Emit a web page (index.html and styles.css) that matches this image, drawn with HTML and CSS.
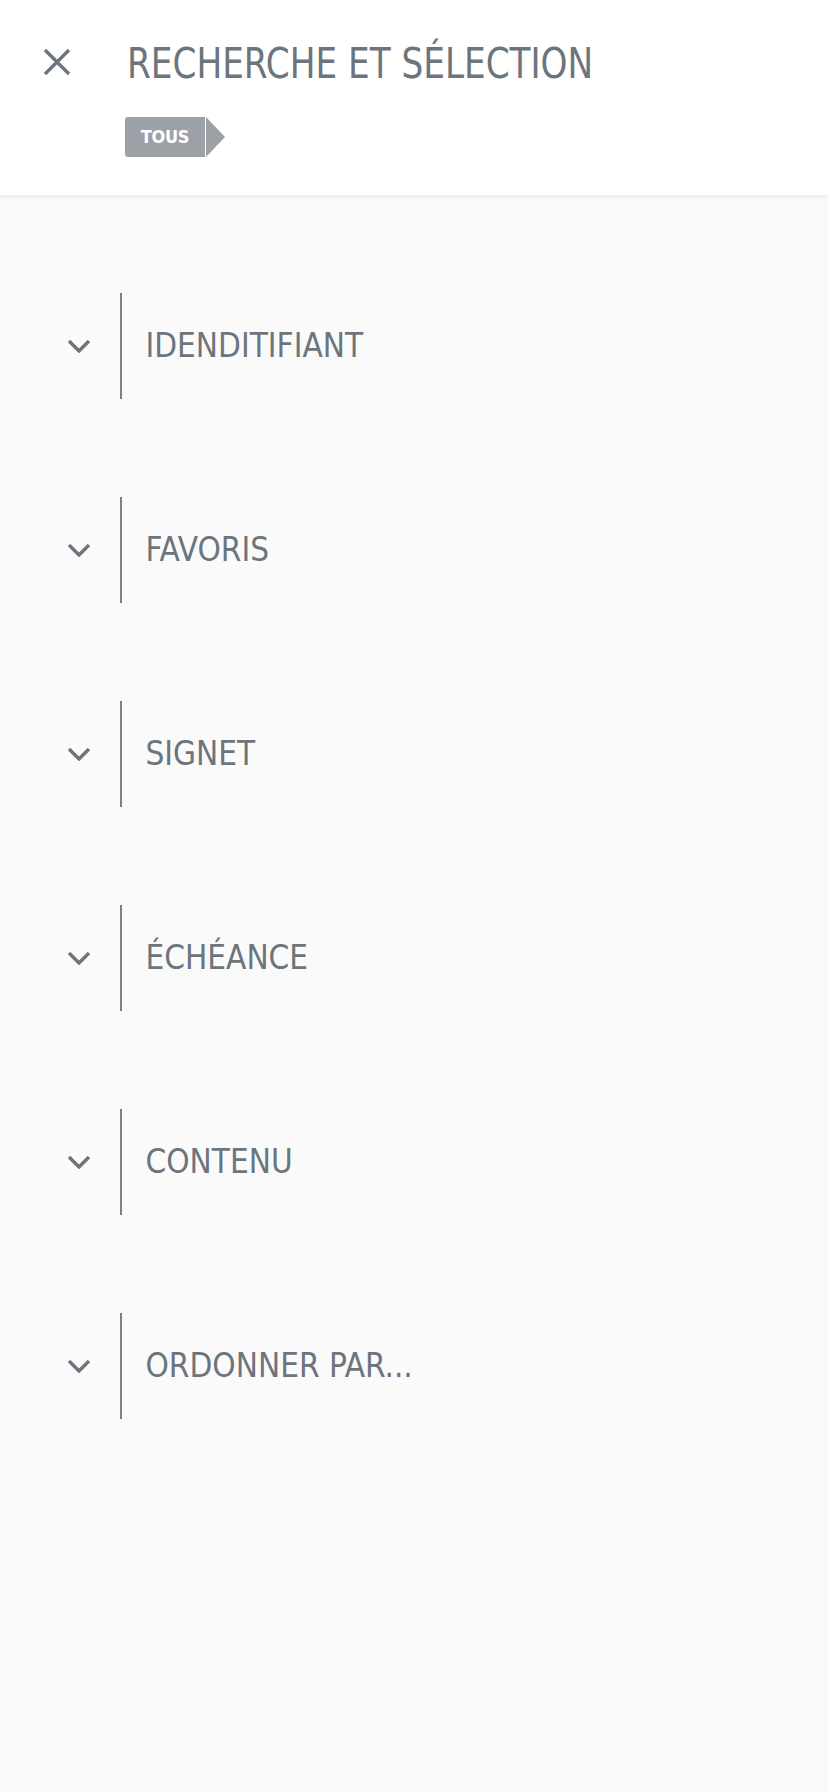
FILE: index.html
```html
<!DOCTYPE html>
<html lang="fr">
<head>
<meta charset="utf-8">
<title>Recherche et sélection</title>
<link rel="stylesheet" href="styles.css">
</head>
<body>
<header class="header">
  <button class="close" aria-label="Fermer">
    <svg width="28" height="28" viewBox="0 0 28 28"><path d="M2 2 L26 26 M26 2 L2 26" stroke="#6c747c" stroke-width="3.3" fill="none"/></svg>
  </button>
  <div class="head-text">
    <h1 class="title">RECHERCHE ET SÉLECTION</h1>
    <div class="tag"><span class="tag-body">TOUS</span><span class="tag-arrow"></span></div>
  </div>
</header>
<main class="list">
  <div class="row"><span class="chev"><svg width="24" height="14" viewBox="0 0 24 14"><path d="M2 2 L12 12 L22 2" stroke="#6c747c" stroke-width="3.4" fill="none"/></svg></span><span class="divider"></span><span class="label">IDENDITIFIANT</span></div>
  <div class="row"><span class="chev"><svg width="24" height="14" viewBox="0 0 24 14"><path d="M2 2 L12 12 L22 2" stroke="#6c747c" stroke-width="3.4" fill="none"/></svg></span><span class="divider"></span><span class="label">FAVORIS</span></div>
  <div class="row"><span class="chev"><svg width="24" height="14" viewBox="0 0 24 14"><path d="M2 2 L12 12 L22 2" stroke="#6c747c" stroke-width="3.4" fill="none"/></svg></span><span class="divider"></span><span class="label">SIGNET</span></div>
  <div class="row"><span class="chev"><svg width="24" height="14" viewBox="0 0 24 14"><path d="M2 2 L12 12 L22 2" stroke="#6c747c" stroke-width="3.4" fill="none"/></svg></span><span class="divider"></span><span class="label">ÉCHÉANCE</span></div>
  <div class="row"><span class="chev"><svg width="24" height="14" viewBox="0 0 24 14"><path d="M2 2 L12 12 L22 2" stroke="#6c747c" stroke-width="3.4" fill="none"/></svg></span><span class="divider"></span><span class="label">CONTENU</span></div>
  <div class="row"><span class="chev"><svg width="24" height="14" viewBox="0 0 24 14"><path d="M2 2 L12 12 L22 2" stroke="#6c747c" stroke-width="3.4" fill="none"/></svg></span><span class="divider"></span><span class="label">ORDONNER PAR...</span></div>
</main>
</body>
</html>
```

FILE: styles.css
```css
html, body {
  margin: 0;
  padding: 0;
}
body {
  width: 828px;
  min-height: 1792px;
  background: #fafafa;
  font-family: "DejaVu Sans Condensed", "DejaVu Sans", sans-serif;
  font-stretch: condensed;
  color: #6c747c;
}
.header {
  position: relative;
  z-index: 1;
  height: 195px;
  box-sizing: border-box;
  background: #fff;
  box-shadow: 0 2px 5px rgba(0, 0, 0, 0.07);
  display: flex;
  align-items: flex-start;
  padding: 47px 0 0 43px;
}
.close {
  border: 0;
  background: none;
  padding: 0;
  margin: 1px 0 0 0;
  width: 28px;
  height: 28px;
  display: block;
}
.close svg { display: block; }
.head-text {
  margin-left: 56px;
  display: flex;
  flex-direction: column;
  align-items: flex-start;
}
.title {
  margin: -9px 0 0 0;
  font-size: 43px;
  line-height: 50px;
  font-weight: normal;
  color: #6c747c;
  white-space: nowrap;
  transform: scaleX(0.886);
  transform-origin: left center;
}
.tag {
  display: flex;
  margin-top: 29px;
  margin-left: -2px;
}
.tag-body {
  width: 80px;
  height: 40px;
  box-sizing: border-box;
  background: #9ca1a8;
  border-radius: 3px 0 0 3px;
  color: #fff;
  font-size: 18px;
  font-weight: bold;
  line-height: 40px;
  text-align: center;
  letter-spacing: -0.3px;
}
.tag-arrow {
  width: 19px;
  height: 40px;
  margin-left: 1px;
  background: #9ca1a8;
  clip-path: polygon(0 0, 100% 50%, 0 100%);
}
.list {
  display: flex;
  flex-direction: column;
  gap: 98px;
  padding-top: 98px;
}
.row {
  display: flex;
  align-items: center;
  height: 106px;
}
.chev {
  width: 24px;
  height: 14px;
  margin-left: 67px;
}
.chev svg { display: block; }
.divider {
  width: 1.5px;
  height: 106px;
  background: #7a8189;
  margin-left: 29px;
}
.label {
  margin-left: 24px;
  font-size: 33px;
  line-height: 40px;
  color: #6c747c;
}
```
